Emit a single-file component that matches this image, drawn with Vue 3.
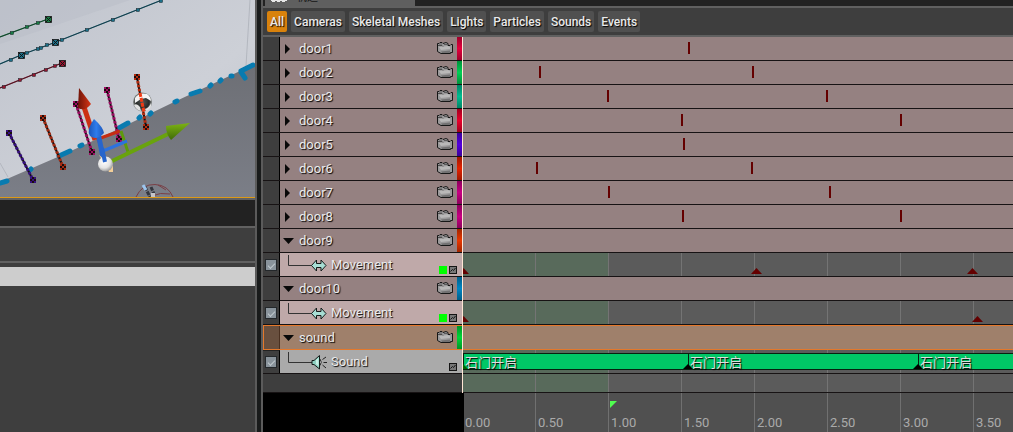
<script setup>
const filters = ['All', 'Cameras', 'Skeletal Meshes', 'Lights', 'Particles', 'Sounds', 'Events']
const pxPerSecond = 146
const at = (t) => ({ left: `${Math.round(t * pxPerSecond)}px` })

const rows = [
  { kind: 'group', name: 'door1', color: '#e4003d', ticks: [1.54] },
  { kind: 'group', name: 'door2', color: '#00cf55', ticks: [0.52, 1.98] },
  { kind: 'group', name: 'door3', color: '#00bd91', ticks: [0.986, 2.486] },
  { kind: 'group', name: 'door4', color: '#e8002b', ticks: [1.49, 2.99] },
  { kind: 'group', name: 'door5', color: '#5300dd', ticks: [1.51] },
  { kind: 'group', name: 'door6', color: '#e42100', ticks: [0.5, 1.97] },
  { kind: 'group', name: 'door7', color: '#c80082', ticks: [0.99, 2.507] },
  { kind: 'group', name: 'door8', color: '#c80082', ticks: [1.5, 2.99] },
  { kind: 'group', name: 'door9', color: '#e83600', open: true },
  { kind: 'move', name: 'Movement', keys: [0, 2.01, 3.486] },
  { kind: 'group', name: 'door10', color: '#0086c4', open: true },
  { kind: 'move', name: 'Movement', keys: [0, 3.52] },
  { kind: 'group', name: 'sound', color: '#00d638', open: true, selected: true },
  { kind: 'audio', name: 'Sound', clips: [0, 1.54, 3.116] },
]
const clipName = '石门开启'
const marks = ['0.00', '0.50', '1.00', '1.50', '2.00', '2.50', '3.00', '3.50']

const trails = [
  { c: '#187c43', d: 'M0 37L48 19', dots: [[12, 33], [27, 27], [38, 23]], ends: [[48, 19]] },
  { c: '#1b6f88', d: 'M0 64L21 55L56 42L162 0', dots: [[11, 60], [27, 53], [38, 49], [41, 48], [47, 45], [62, 40], [87, 30], [113, 20], [138, 10], [161, 1]], ends: [[21, 55], [55, 42]] },
  { c: '#98152f', d: 'M0 88L62 63', dots: [[4, 87], [20, 80], [34, 75], [46, 70], [55, 66]], ends: [[62, 63]] },
]
const ropes = [
  { c: '#371080', a: [9, 133], b: [33, 180] },
  { c: '#a42b12', a: [43, 118], b: [63, 167] },
  { c: '#9d0d63', a: [76, 104], b: [92, 152] },
  { c: '#9d0d63', a: [107, 90], b: [119, 139] },
  { c: '#b42c10', a: [137, 77], b: [146, 127] },
]
</script>

<template>
  <main class="editor">
    <section class="side">
      <svg class="viewport" viewBox="0 0 255 197" preserveAspectRatio="xMinYMin slice" role="img" aria-label="Viewport">
        <defs>
          <linearGradient id="wall" x1="0" y1="0" x2="1" y2="1">
            <stop offset="0" stop-color="#c0c4cd" /><stop offset="0.6" stop-color="#cdd0d7" /><stop offset="1" stop-color="#bfc3cb" />
          </linearGradient>
          <linearGradient id="floor" x1="0" y1="0" x2="0" y2="1">
            <stop offset="0" stop-color="#6d6f75" /><stop offset="1" stop-color="#7b7e87" />
          </linearGradient>
          <radialGradient id="ball" cx="0.4" cy="0.35" r="0.7">
            <stop offset="0" stop-color="#ffffff" /><stop offset="0.6" stop-color="#e3e3e3" /><stop offset="1" stop-color="#8f8f8f" />
          </radialGradient>
          <radialGradient id="chrome" cx="0.5" cy="0.5" r="0.5">
            <stop offset="0" stop-color="#555957" /><stop offset="0.7" stop-color="#262928" /><stop offset="1" stop-color="#8b8f8e" />
          </radialGradient>
          <linearGradient id="redcone"><stop offset="0" stop-color="#6e1408" /><stop offset="1" stop-color="#d83616" /></linearGradient>
          <linearGradient id="bluecone"><stop offset="0" stop-color="#1c55b8" /><stop offset="0.5" stop-color="#2f7cec" /><stop offset="1" stop-color="#1d56b8" /></linearGradient>
          <linearGradient id="greencone" x1="0" y1="0" x2="0" y2="1"><stop offset="0" stop-color="#7db414" /><stop offset="1" stop-color="#3f6a08" /></linearGradient>
        </defs>
        <rect width="255" height="197" fill="url(#wall)" />
        <path d="M0 0H130L0 44Z" fill="#b9bdc8" opacity="0.5" />
        <path d="M250 0L246 66M0 163L8 177" stroke="#b3b7bf" />
        <path d="M0 182L60 156L110 133L172 103L255 64V197H0Z" fill="url(#floor)" />
        <g stroke="#087bb0" stroke-width="5" stroke-linecap="round" fill="none">
          <path d="M0 183L7 181M30 170L31 169M59 156L70 151M80 146L82 145M119 128L128 123M139 118L140 117M150 114L151 113M175 102L177 101" />
          <path d="M191 94L200 91M210 86L211 85M220 81L221 80M231 76L232 76M241 71L253 65M241 72L245 78" />
        </g>
        <g v-for="t in trails" :key="t.d">
          <path :d="t.d" :stroke="t.c" stroke-width="1.2" fill="none" />
          <path :d="t.d" stroke="#10171a" stroke-width="0.6" fill="none" />
          <rect v-for="p in t.dots" :key="p[0]" :x="p[0] - 1.5" :y="p[1] - 1.5" width="3" height="3" :fill="t.c" stroke="#182328" stroke-width="0.5" />
          <g v-for="p in t.ends" :key="p[0]">
            <rect :x="p[0] - 2.5" :y="p[1] - 2.5" width="6" height="6" :fill="t.c" stroke="#121212" stroke-width="0.8" />
            <path :d="`M${p[0] - 2} ${p[1] - 2}l5 5m0 -5l-5 5`" stroke="#121212" />
          </g>
        </g>
        <g v-for="r in ropes" :key="r.a[0]">
          <path :d="`M${r.a}L${r.b}`" stroke="#151010" stroke-width="2" />
          <path :d="`M${r.a}L${r.b}`" :stroke="r.c" stroke-width="3" stroke-dasharray="2.5 1.5" />
          <g v-for="p in [r.a, r.b]" :key="p[1]">
            <rect :x="p[0] - 3" :y="p[1] - 3" width="6" height="6" fill="#1a0d0d" />
            <path :d="`M${p[0] - 3} ${p[1] - 2}h2m2 0h2m-4 2h2m-4 2h2m2 0h2`" :stroke="r.c" stroke-width="2" />
          </g>
        </g>
        <circle cx="142.500" cy="102" r="9.500" fill="url(#chrome)" />
        <path d="M135 98Q139 92 147 94Q151 97 151 101L146 98L141 99L135 103Z" fill="#f4f4f4" />
        <path d="M134 105Q137 103 140 107L141 111Q136 110 134 105M145 109Q149 108 151 103Q152 109 146 111Z" fill="#e2e2e2" />
        <path d="M140 93L144 112" stroke="#f03b15" stroke-width="3" stroke-dasharray="4 1" />
        <path d="M103 152L98 139L120 131" stroke="#c62d12" stroke-width="3" fill="none" />
        <path d="M121 131L128 152" stroke="#5e9a0c" stroke-width="3" />
        <path d="M103 151L127 141" stroke="#2c72de" stroke-width="3" />
        <path d="M106 164L168 134" stroke="#69a30d" stroke-width="4" />
        <path d="M190 123L166 126Q166 134 171 140Z" fill="url(#greencone)" />
        <path d="M83 104L95 140" stroke="#cc3013" stroke-width="5" />
        <path d="M79 88L78 108Q85 112 91 104Z" fill="url(#redcone)" />
        <path d="M98 133L104 162" stroke="#2765cc" stroke-width="5" />
        <path d="M94 119Q86 130 90 136Q97 141 104 133Q103 127 94 119Z" fill="url(#bluecone)" />
        <path d="M99 155L109 172H113V166Z" fill="#f2ce99" />
        <circle cx="105.500" cy="164" r="7.500" fill="url(#ball)" />
        <path d="M102 148L105 162" stroke="#2765cc" stroke-width="4" />
        <g fill="none" stroke="#793f45">
          <path d="M136 197Q142 184 155 184.500Q168 185 173 197M152 196Q160 192 170 194M158 185L166 190" />
        </g>
        <path d="M145 187L150 197M151 187L154 194" stroke="#33363e" stroke-width="3" stroke-dasharray="4 1" />
        <path d="M143 185L146 190" stroke="#9cc5ee" stroke-width="3" />
        <rect x="151" y="193" width="4" height="4" fill="#c5c5c9" />
      </svg>
      <div class="strip dark"></div>
      <div class="strip"></div>
      <div class="panel"><div class="highlight"></div></div>
    </section>

    <section class="matinee">
      <header class="tabs">
        <div class="tab">
          <svg class="clapper" viewBox="0 0 16 3" aria-hidden="true">
            <path d="M0 0H16V1H14V2H11V1H9V2H6V1H4V2H1V1H0Z" fill="#e6e6e6" />
          </svg>
          <span>轨迹</span>
        </div>
      </header>
      <nav class="filters">
        <button v-for="(f, i) in filters" :key="f" type="button" :class="{ active: i === 0 }">{{ f }}</button>
      </nav>

      <div class="tracks">
        <div v-for="(r, i) in rows" :key="i" class="row" :class="[r.kind, { selected: r.selected }]">
          <div class="toggle">
            <input v-if="r.kind !== 'group'" type="checkbox" checked :aria-label="`Enable ${r.name}`" />
          </div>
          <div class="label">
            <template v-if="r.kind === 'group'">
              <svg class="arrow" viewBox="0 0 12 12" aria-hidden="true">
                <path :d="r.open ? 'M0 3H11L5.5 9Z' : 'M2 1V11L7 6Z'" fill="#080808" />
              </svg>
              <span class="name">{{ r.name }}</span>
              <svg class="camera" viewBox="0 0 17 13" aria-hidden="true">
                <path d="M0.500 1.500H2L3 0.500H5L6 1.500L9 0.500L11 1.500V3.500H13L14 2.500H15.500V10.500H13.500V11.500H4L0.500 9.500Z" fill="#9a999a" stroke="#171717" />
                <path d="M2 2H5M7 2.500H10" stroke="#5c5b5c" />
                <path d="M2 5L11 4L13 5V7L4 8Z" fill="#b9b8b8" />
                <path d="M4 9.500L13 8.500V11H5Z" fill="#727172" />
                <path d="M1 3.500H5L6 4.500" stroke="#4c4b4b" fill="none" />
              </svg>
              <i class="swatch" :style="{ '--c': r.color }"></i>
            </template>
            <template v-else>
              <svg class="branch" viewBox="0 0 24 12" aria-hidden="true"><path d="M0.500 0V10.500H24" fill="none" stroke="#333" /></svg>
              <svg v-if="r.kind === 'move'" class="icon" viewBox="0 0 16 16" aria-hidden="true">
                <path d="M0.500 8.500L5.500 3V6.500H10V3L15 8.500L10 14V10.500H5.500V14Z" fill="#a7ded4" stroke="#151b1a" />
              </svg>
              <svg v-else class="icon" viewBox="0 0 16 16" aria-hidden="true">
                <path d="M1 6.500H3L8.500 1.500V15L3 10.500H1Z" fill="#8fd0c0" stroke="#151b1a" />
                <path d="M5 6L7.500 4V12L5 10Z" fill="#c9efe6" />
                <path d="M9 5Q11.500 8 9 11.500" fill="#e8e8e8" stroke="#222" />
                <path d="M11.500 5.500L15 3M12.500 8.500H16M11.500 11L15 14" stroke="#222" />
              </svg>
              <span class="name">{{ r.name }}</span>
              <i v-if="r.kind === 'move'" class="green"></i>
              <svg class="graph" viewBox="0 0 8 8" aria-hidden="true">
                <rect x="0.500" y="0.500" width="7" height="7" fill="#777" stroke="#151515" />
                <path d="M1.500 5.500L3.500 3.500L4.500 4.500L6.500 2" fill="none" stroke="#151515" />
              </svg>
            </template>
          </div>
          <div class="lane">
            <i v-for="t in r.ticks" :key="t" class="tick" :style="at(t)"></i>
            <i v-for="t in r.keys" :key="t" class="key" :style="at(t)"></i>
            <div v-for="(t, n) in r.clips" :key="t" class="clip" :class="{ first: n === 0 }" :style="at(t)">{{ clipName }}</div>
          </div>
        </div>
        <div class="row rest"><div class="toggle"></div><div class="label"></div><div class="lane"></div></div>
        <div class="playhead"></div>
      </div>

      <footer class="ruler">
        <div class="scale">
          <i class="loop" :style="at(1)"></i>
          <span v-for="m in marks" :key="m" class="mark" :style="at(Number(m))">{{ m }}</span>
        </div>
      </footer>
    </section>
  </main>
</template>

<style>
body { background: #1b1b1b; }
</style>

<style scoped>
* { box-sizing: border-box; }
.editor {
  display: flex;
  gap: 4px;
  height: 100vh;
  min-height: 432px;
  overflow: hidden;
  background: #191b1b;
  font: 13px/16px Roboto, "Noto Sans CJK SC", sans-serif;
}
.side {
  flex: 0 0 257px;
  display: flex;
  flex-direction: column;
  border-right: 2px solid #5b5b5b;
  background: #3e3e3e;
}
.viewport {
  display: block;
  width: 100%;
  height: 198px;
  border-bottom: 1px solid #dd9a16;
}
.strip { height: 35px; border-top: 2px solid #616161; }
.strip.dark { height: 28px; background: #222; }
.panel { flex: 1; border-top: 2px solid #616161; padding-top: 4px; }
.highlight { height: 19px; background: #cdcdcd; }

.matinee {
  flex: 1;
  min-width: 0;
  display: flex;
  flex-direction: column;
  border-left: 2px solid #5b5b5b;
  background: #3e3e3e;
}
.tabs { height: 6px; background: #222; display: flex; padding-left: 2px; }
.tab {
  width: 150px;
  height: 6px;
  overflow: hidden;
  display: flex;
  align-items: flex-end;
  gap: 9px;
  padding-left: 6px;
  background: #5f5f5f;
  color: #151515;
  font-size: 11px;
}
.clapper { width: 16px; height: 3px; align-self: flex-start; }
.tab span { line-height: 16px; }
.filters {
  display: flex;
  gap: 4px;
  padding: 3px 4px;
  border: solid #606060;
  border-width: 2px 0;
}
.filters button {
  height: 21px;
  padding: 0 3px;
  border: 0;
  border-radius: 2px;
  background: #505050;
  color: #e9e9e9;
  font: 500 12px/20px Roboto, sans-serif;
  text-shadow: 1px 1px 1px #000;
  white-space: nowrap;
}
.filters .active { background: #d9820c; }

.tracks { position: relative; }
.row { display: flex; height: 24px; border-bottom: 1px solid #171314; }
.toggle {
  width: 17px;
  flex: none;
  display: flex;
  align-items: center;
  justify-content: center;
  border-right: 1px solid #000;
  background: #3e3e3e;
}
.toggle input {
  appearance: none;
  width: 12px;
  height: 12px;
  margin: 0;
  border: 1px solid #24282b;
  background: #89939b;
  display: grid;
  place-items: center;
}
.toggle input::before {
  content: "";
  width: 6px;
  height: 3px;
  border: solid #c0c9ce;
  border-width: 0 0 1px 1px;
  rotate: -45deg;
}
.label {
  flex: none;
  display: flex;
  align-items: center;
  width: 183px;
  background: #958181;
}
.lane { position: relative; flex: 1; overflow: hidden; background: #958181; }
.name {
  flex: 1;
  color: #ececec;
  text-shadow: 1px 1px 1px #000;
}
.arrow { flex: none; width: 12px; height: 12px; margin: 0 4px 0 3px; }
.camera { width: 17px; height: 13px; margin-right: 3px; }
.swatch {
  align-self: stretch;
  width: 6px;
  background: linear-gradient(rgb(0 0 0 / 30%), transparent 50%, rgb(0 0 0 / 30%)), var(--c);
}
.branch { width: 24px; height: 12px; margin: 0 0 8px 8px; }
.icon { width: 16px; height: 16px; margin-right: 4px; margin-left: -1px; }
.move .name,
.audio .name { line-height: 18px; padding-top: 1px; }
.move .label { background: #bfa9a9; }
.audio .label { background: #aaa; }
.green { width: 8px; height: 8px; margin: 11px 2px 0 0; background: #0f0; }
.graph { width: 8px; height: 8px; margin: 11px 6px 0 0; }
.move .lane,
.audio .lane,
.rest .lane {
  background:
    repeating-linear-gradient(90deg, transparent 0 72px, #747474 72px 73px),
    linear-gradient(90deg, #586a5b 145px, #5b5b5b 145px);
}
.selected { height: 25px; border: solid #e5782a; border-width: 1px 0 1px 1px; }
.selected .toggle { width: 16px; background: #69503f; border-color: #4a3020; }
.selected .label,
.selected .lane { background: #9f806b; }
.audio .toggle { border-top: 1px solid #222; }
.rest { height: 19px; }
.rest .label { background: #3e3e3e; }
.rest .toggle { border-right: 0; }
.tick { position: absolute; top: 5px; width: 2px; height: 12px; background: #640000; }
.key {
  position: absolute;
  bottom: 2px;
  width: 11px;
  height: 6px;
  margin-left: -5px;
  background: #640000;
  clip-path: polygon(50% 0, 100% 100%, 0 100%);
}
.clip {
  position: absolute;
  top: 3px;
  right: 0;
  height: 17px;
  padding-left: 1px;
  border: solid #06200f;
  border-width: 1px 0 1px 1px;
  background: #00c766;
  color: #dedede;
  line-height: 17px;
  text-shadow: 1px 1px 1px #000;
}
.clip::before {
  content: "";
  position: absolute;
  left: -6px;
  bottom: 0;
  width: 10px;
  height: 5px;
  background: #000;
  clip-path: polygon(50% 0, 100% 100%, 0 100%);
}
.clip.first::before { background: #006400; }
.playhead {
  position: absolute;
  z-index: 1;
  top: 0;
  bottom: 0;
  left: 199px;
  width: 1px;
  background: #ffe6d5;
}
.ruler { flex: 1; display: flex; background: #000; padding-left: 200px; }
.scale {
  position: relative;
  flex: 1;
  overflow: hidden;
  border-left: 1px solid #000;
  background:
    repeating-linear-gradient(90deg, transparent 0 71px, #707070 71px 72px, transparent 72px 73px),
    #505050;
}
.mark { position: absolute; bottom: 1px; padding-left: 1px; color: #aaa; }
.loop {
  position: absolute;
  top: 8px;
  width: 7px;
  height: 7px;
  background: #50ff50;
  clip-path: polygon(0 0, 100% 0, 0 100%);
}
</style>
